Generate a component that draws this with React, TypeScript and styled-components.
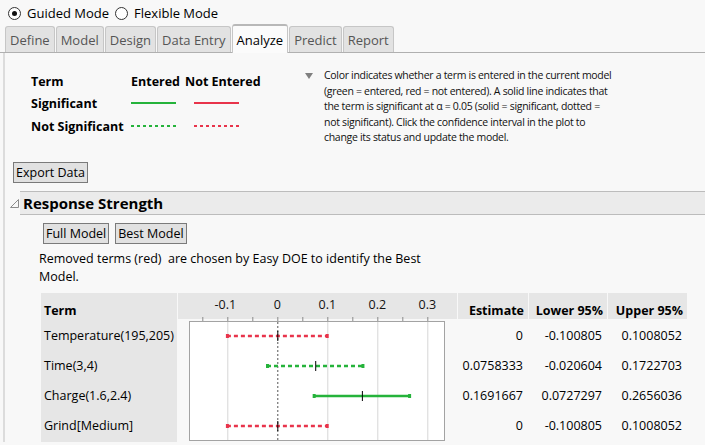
import React from "react";
import styled, { createGlobalStyle } from "styled-components";

const GREEN = "#25b33b";
const RED = "#e8344b";

const GlobalStyle = createGlobalStyle`
  body {
    margin: 0;
    background: #f8f8f8;
    font-family: "Open Sans", "Noto Sans", sans-serif;
    color: #000;
  }
`;

const Page = styled.div`
  width: 705px;
  height: 445px;
  overflow: hidden;
  background: #f8f8f8;
`;

const ModeBar = styled.div`
  display: flex;
  align-items: center;
  height: 26px;
  padding-left: 8px;
  font-size: 13px;
  gap: 6px;
`;

const RadioLabel = styled.label`
  display: flex;
  align-items: center;
  gap: 6px;
`;

const RadioDot = styled.span<{ $checked?: boolean }>`
  width: 11px;
  height: 11px;
  border: 1px solid #333;
  border-radius: 50%;
  background: #fff;
  position: relative;
  &::after {
    content: "";
    display: ${(p) => (p.$checked ? "block" : "none")};
    position: absolute;
    left: 3px;
    top: 3px;
    width: 5px;
    height: 5px;
    border-radius: 50%;
    background: #111;
  }
`;

const TabStrip = styled.div`
  display: flex;
  align-items: flex-end;
  height: 26px;
  padding-left: 5px;
  border-bottom: 1px solid #b0b0b0;
`;

const Tab = styled.div<{ $active?: boolean }>`
  height: ${(p) => (p.$active ? "27px" : "25px")};
  margin-bottom: ${(p) => (p.$active ? "-1px" : "0")};
  margin-right: 1px;
  padding: 0 4px;
  display: flex;
  align-items: center;
  font-size: 13px;
  color: ${(p) => (p.$active ? "#000" : "#555")};
  background: ${(p) => (p.$active ? "#fbfbfb" : "#e2e2e2")};
  border: 1px solid #c6c6c6;
  border-top: ${(p) => (p.$active ? "2px solid #b8b8b8" : "1px solid #c6c6c6")};
  border-bottom: none;
  border-radius: 3px 3px 0 0;
`;

const Panel = styled.div`
  margin-left: 3px;
  border-left: 2px solid #dcdcdc;
  padding: 17px 0 0 0;
`;

const Top = styled.div`
  display: flex;
  align-items: flex-start;
`;

const Legend = styled.div`
  display: grid;
  grid-template-columns: 100px 54px 74px;
  grid-template-rows: 22px 22px 24px;
  align-items: center;
  margin-left: 26px;
  font-size: 12.5px;
  font-weight: 700;
  white-space: nowrap;
`;

const LineSample = styled.span<{ $color: string; $dotted?: boolean }>`
  display: block;
  width: 45px;
  height: 2px;
  margin-left: ${(p) => (p.$color === RED ? "9px" : "0")};
  background: ${(p) =>
    p.$dotted
      ? `repeating-linear-gradient(90deg, ${p.$color} 0 3px, transparent 3px 6px)`
      : p.$color};
`;

const Note = styled.div`
  display: flex;
  margin-left: 46px;
  margin-top: -2px;
  font-size: 10.5px;
  line-height: 15.5px;
  letter-spacing: -0.3px;
  color: #111;
  white-space: nowrap;
`;

const DownArrow = styled.span`
  width: 0;
  height: 0;
  margin-top: 5px;
  margin-right: 11px;
  border-left: 4px solid transparent;
  border-right: 4px solid transparent;
  border-top: 6px solid #808080;
`;

const Button = styled.button`
  font-family: inherit;
  font-size: 12.5px;
  height: 21px;
  padding: 0 2px;
  background: #e1e1e1;
  border: 1px solid #7a7a7a;
  border-radius: 0;
  color: #000;
`;

const ExportRow = styled.div`
  margin: 14px 0 0 8px;
`;

const Section = styled.div`
  margin-top: 8px;
`;

const SectionHeader = styled.div`
  display: flex;
  align-items: center;
`;

const SectionToggle = styled.svg`
  width: 15px;
  flex: none;
`;

const SectionTitle = styled.div`
  flex: 1;
  height: 22px;
  display: flex;
  align-items: center;
  padding-left: 3px;
  background: #ebebeb;
  border-top: 1px solid #bcbcbc;
  border-bottom: 1px solid #bcbcbc;
  font-size: 15px;
  font-weight: 700;
`;

const SectionBody = styled.div`
  padding: 8px 0 0 34px;
`;

const ButtonRow = styled.div`
  display: flex;
  gap: 6px;
  margin-left: 4px;
`;

const Hint = styled.p`
  margin: 6px 0 0 0;
  font-size: 12.5px;
  line-height: 18px;
  white-space: nowrap;
`;

const Table = styled.div`
  display: flex;
  gap: 1px;
  margin: 7px 0 0 2px;
`;

const Column = styled.div<{ $width: number }>`
  width: ${(p) => p.$width}px;
  display: flex;
  flex-direction: column;
`;

const HeadCell = styled.div<{ $right?: boolean }>`
  height: 26px;
  display: flex;
  align-items: flex-end;
  justify-content: ${(p) => (p.$right ? "flex-end" : "flex-start")};
  padding: 0 4px 1px 3px;
  box-sizing: border-box;
  background: #e6e6e6;
  font-size: 12.5px;
  line-height: 14px;
  font-weight: 700;
  white-space: nowrap;
`;

const ColumnBody = styled.div<{ $shaded?: boolean }>`
  padding: 2px 0 1px 0;
  background: ${(p) => (p.$shaded ? "#e6e6e6" : "transparent")};
`;

const Cell = styled.div<{ $right?: boolean }>`
  height: 30px;
  display: flex;
  align-items: center;
  justify-content: ${(p) => (p.$right ? "flex-end" : "flex-start")};
  padding: 0 5px 0 3px;
  font-size: 12.5px;
  white-space: nowrap;
`;

type Row = {
  term: string;
  est: number;
  lo: number;
  hi: number;
  entered: boolean;
  sig: boolean;
  estText: string;
  loText: string;
  hiText: string;
};

const rows: Row[] = [
  { term: "Temperature(195,205)", est: 0, lo: -0.100805, hi: 0.1008052, entered: false, sig: false, estText: "0", loText: "-0.100805", hiText: "0.1008052" },
  { term: "Time(3,4)", est: 0.0758333, lo: -0.020604, hi: 0.1722703, entered: true, sig: false, estText: "0.0758333", loText: "-0.020604", hiText: "0.1722703" },
  { term: "Charge(1.6,2.4)", est: 0.1691667, lo: 0.0727297, hi: 0.2656036, entered: true, sig: true, estText: "0.1691667", loText: "0.0727297", hiText: "0.2656036" },
  { term: "Grind[Medium]", est: 0, lo: -0.100805, hi: 0.1008052, entered: false, sig: false, estText: "0", loText: "-0.100805", hiText: "0.1008052" },
];

const X = (v: number) => 99.3 + 500 * v;

const PlotSvg = styled.svg`
  display: block;
  font-family: "Open Sans", "Noto Sans", sans-serif;
`;

function IntervalPlot() {
  const majors = [-0.1, 0, 0.1, 0.2, 0.3];
  const ticks = [-0.15, -0.1, -0.05, 0, 0.05, 0.1, 0.15, 0.2, 0.25, 0.3];
  return (
    <PlotSvg width={279} height={149} viewBox="0 0 279 149">
      <rect x={0} y={0} width={279} height={26} fill="#e6e6e6" />
      {majors.map((m) => (
        <text key={m} x={X(m) - (m < 0 ? 2 : 0)} y={16} fontSize={12.5} textAnchor="middle" fill="#111">
          {m === 0 ? "0" : m.toFixed(1)}
        </text>
      ))}
      {ticks.map((t) => (
        <line key={t} x1={X(t) + 0.5} x2={X(t) + 0.5} y1={24} y2={28} stroke="#8a8a8a" />
      ))}
      <rect x={11.5} y={28.5} width={255} height={119} fill="#fff" stroke="#a3a3a3" />
      {majors
        .filter((m) => m !== 0)
        .map((m) => (
          <line key={m} x1={X(m) + 0.5} x2={X(m) + 0.5} y1={29} y2={147} stroke="#d6d6d6" />
        ))}
      <line x1={X(0) + 0.5} x2={X(0) + 0.5} y1={29} y2={147} stroke="#555" strokeDasharray="2 2" />
      {rows.map((r, i) => {
        const y = 43 + i * 30;
        const color = r.entered ? GREEN : RED;
        const x1 = X(r.lo);
        const x2 = X(r.hi);
        return (
          <g key={r.term}>
            <line
              x1={x1}
              x2={x2}
              y1={y}
              y2={y}
              stroke={color}
              strokeWidth={2.5}
              strokeDasharray={r.sig ? undefined : "4 3"}
            />
            <rect x={x1 - 1} y={y - 2} width={3} height={4} fill={color} />
            <rect x={x2 - 2} y={y - 2} width={3} height={4} fill={color} />
            <line x1={X(r.est) + 0.5} x2={X(r.est) + 0.5} y1={y - 5} y2={y + 5} stroke="#000" />
          </g>
        );
      })}
    </PlotSvg>
  );
}

export default function App() {
  return (
    <Page>
      <GlobalStyle />
      <ModeBar>
        <RadioLabel>
          <RadioDot $checked />
          Guided Mode
        </RadioLabel>
        <RadioLabel>
          <RadioDot />
          Flexible Mode
        </RadioLabel>
      </ModeBar>
      <TabStrip>
        {["Define", "Model", "Design", "Data Entry", "Analyze", "Predict", "Report"].map((t) => (
          <Tab key={t} $active={t === "Analyze"}>
            {t}
          </Tab>
        ))}
      </TabStrip>
      <Panel>
        <Top>
          <Legend>
            <span>Term</span>
            <span>Entered</span>
            <span>Not Entered</span>
            <span>Significant</span>
            <LineSample $color={GREEN} />
            <LineSample $color={RED} />
            <span>Not Significant</span>
            <LineSample $color={GREEN} $dotted />
            <LineSample $color={RED} $dotted />
          </Legend>
          <Note>
            <DownArrow />
            <div>
              Color indicates whether a term is entered in the current model
              <br />
              (green = entered, red = not entered). A solid line indicates that
              <br />
              the term is significant at α = 0.05 (solid = significant, dotted =
              <br />
              not significant). Click the confidence interval in the plot to
              <br />
              change its status and update the model.
            </div>
          </Note>
        </Top>
        <ExportRow>
          <Button>Export Data</Button>
        </ExportRow>
        <Section>
          <SectionHeader>
            <SectionToggle height={10} viewBox="0 0 15 10">
              <path d="M5.5 9.5 L13.5 9.5 L13.5 1.5 Z" fill="none" stroke="#8c8c8c" />
            </SectionToggle>
            <SectionTitle>Response Strength</SectionTitle>
          </SectionHeader>
          <SectionBody>
            <ButtonRow>
              <Button>Full Model</Button>
              <Button>Best Model</Button>
            </ButtonRow>
            <Hint>
              Removed terms (red)&nbsp; are chosen by Easy DOE to identify the Best
              <br />
              Model.
            </Hint>
            <Table>
              <Column $width={136}>
                <HeadCell>Term</HeadCell>
                <ColumnBody $shaded>
                  {rows.map((r) => (
                    <Cell key={r.term}>{r.term}</Cell>
                  ))}
                </ColumnBody>
              </Column>
              <Column $width={279}>
                <IntervalPlot />
              </Column>
              <Column $width={70}>
                <HeadCell $right>Estimate</HeadCell>
                <ColumnBody>
                  {rows.map((r) => (
                    <Cell key={r.term} $right>
                      {r.estText}
                    </Cell>
                  ))}
                </ColumnBody>
              </Column>
              <Column $width={78}>
                <HeadCell $right>Lower 95%</HeadCell>
                <ColumnBody>
                  {rows.map((r) => (
                    <Cell key={r.term} $right>
                      {r.loText}
                    </Cell>
                  ))}
                </ColumnBody>
              </Column>
              <Column $width={79}>
                <HeadCell $right>Upper 95%</HeadCell>
                <ColumnBody>
                  {rows.map((r) => (
                    <Cell key={r.term} $right>
                      {r.hiText}
                    </Cell>
                  ))}
                </ColumnBody>
              </Column>
            </Table>
          </SectionBody>
        </Section>
      </Panel>
    </Page>
  );
}
